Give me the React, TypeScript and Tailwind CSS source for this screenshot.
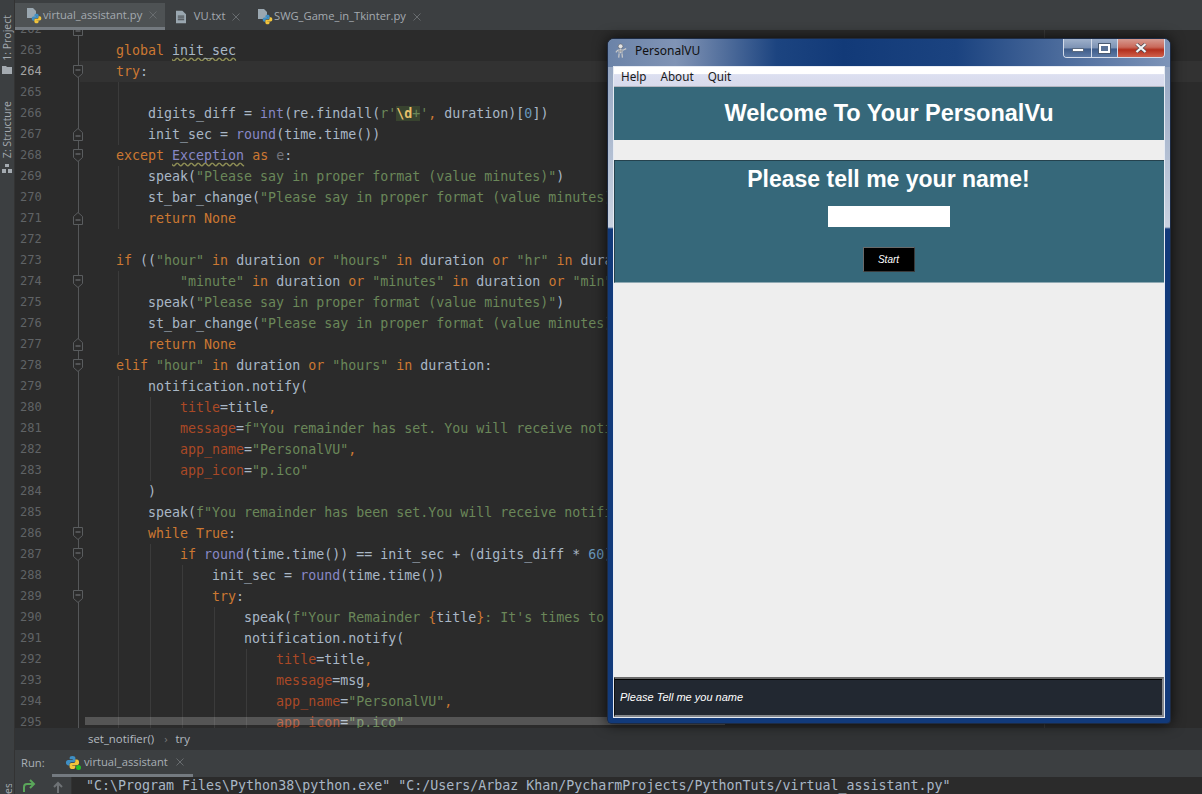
import type { ReactNode } from 'react';

type Tok = [keyof typeof tone, string];

const tone = {
  k: 'text-[#cc7832]',
  s: 'text-[#6a8759]',
  b: 'text-[#8888c6]',
  p: 'text-[#aa4926]',
  n: 'text-[#6897bb]',
  w: 'text-[#a9b7c6] underline decoration-wavy decoration-[#8f8f55] underline-offset-2',
  c: 'text-[#8888c6] underline decoration-wavy decoration-[#8f8f55] underline-offset-2',
  g: 'text-[#72737a]',
  r: 'text-[#e8bf6a] font-bold bg-[#38432f]',
  q: 'text-[#6a8759] bg-[#38432f]',
};

const k = (t: string): Tok => ['k', t];
const s = (t: string): Tok => ['s', t];
const b = (t: string): Tok => ['b', t];
const p = (t: string): Tok => ['p', t];
const n = (t: string): Tok => ['n', t];

const code: { no: number; guides: number; toks?: (string | Tok)[] }[] = [
  { no: 262, guides: 0 },
  { no: 263, guides: 0, toks: [k('global'), ' ', ['w', 'init_sec']] },
  { no: 264, guides: 0, toks: [k('try'), ':'] },
  { no: 265, guides: 1 },
  { no: 266, guides: 1, toks: ['    digits_diff = ', b('int'), '(re.findall(', s("r'"), ['r', '\\d'], ['q', '+'], s("'"), k(','), ' duration)[', n('0'), '])'] },
  { no: 267, guides: 1, toks: ['    init_sec = ', b('round'), '(time.time())'] },
  { no: 268, guides: 0, toks: [k('except'), ' ', ['c', 'Exception'], ' ', k('as'), ' ', ['g', 'e'], ':'] },
  { no: 269, guides: 1, toks: ['    speak(', s('"Please say in proper format (value minutes)"'), ')'] },
  { no: 270, guides: 1, toks: ['    st_bar_change(', s('"Please say in proper format (value minutes)"'), ')'] },
  { no: 271, guides: 1, toks: ['    ', k('return None')] },
  { no: 272, guides: 0 },
  { no: 273, guides: 0, toks: [k('if'), ' ((', s('"hour"'), ' ', k('in'), ' duration ', k('or'), ' ', s('"hours"'), ' ', k('in'), ' duration ', k('or'), ' ', s('"hr"'), ' ', k('in'), ' duration'] },
  { no: 274, guides: 1, toks: ['        ', s('"minute"'), ' ', k('in'), ' duration ', k('or'), ' ', s('"minutes"'), ' ', k('in'), ' duration ', k('or'), ' ', s('"min"')] },
  { no: 275, guides: 1, toks: ['    speak(', s('"Please say in proper format (value minutes)"'), ')'] },
  { no: 276, guides: 1, toks: ['    st_bar_change(', s('"Please say in proper format (value minutes)"'), ')'] },
  { no: 277, guides: 1, toks: ['    ', k('return None')] },
  { no: 278, guides: 0, toks: [k('elif'), ' ', s('"hour"'), ' ', k('in'), ' duration ', k('or'), ' ', s('"hours"'), ' ', k('in'), ' duration:'] },
  { no: 279, guides: 1, toks: ['    notification.notify('] },
  { no: 280, guides: 2, toks: ['        ', p('title'), '=title', k(',')] },
  { no: 281, guides: 2, toks: ['        ', p('message'), '=', s('f"You remainder has set. You will receive notification"'), k(',')] },
  { no: 282, guides: 2, toks: ['        ', p('app_name'), '=', s('"PersonalVU"'), k(',')] },
  { no: 283, guides: 2, toks: ['        ', p('app_icon'), '=', s('"p.ico"')] },
  { no: 284, guides: 1, toks: ['    )'] },
  { no: 285, guides: 1, toks: ['    speak(', s('f"You remainder has been set.You will receive notification"'), ')'] },
  { no: 286, guides: 1, toks: ['    ', k('while True'), ':'] },
  { no: 287, guides: 2, toks: ['        ', k('if'), ' ', b('round'), '(time.time()) == init_sec + (digits_diff * ', n('60'), '):'] },
  { no: 288, guides: 3, toks: ['            init_sec = ', b('round'), '(time.time())'] },
  { no: 289, guides: 3, toks: ['            ', k('try'), ':'] },
  { no: 290, guides: 4, toks: ['                speak(', s('f"Your Remainder '), k('{'), 'title', k('}'), s(": It's times to do"), ')'] },
  { no: 291, guides: 4, toks: ['                notification.notify('] },
  { no: 292, guides: 5, toks: ['                    ', p('title'), '=title', k(',')] },
  { no: 293, guides: 5, toks: ['                    ', p('message'), '=msg', k(',')] },
  { no: 294, guides: 5, toks: ['                    ', p('app_name'), '=', s('"PersonalVU"'), k(',')] },
  { no: 295, guides: 5, toks: ['                    ', p('app_icon'), '=', s('"p.ico"')] },
];

const foldDown = [264, 268, 274, 278, 286, 287, 289];
const foldUp = [262, 267, 271, 277];
const guideLeft = ['left-[103px]', 'left-[135px]', 'left-[167px]', 'left-[199px]', 'left-[231px]'];

function PyLogo({ className }: { className: string }) {
  const blue = 'M8 1C5.6 1 5 2 5 3.2v1.4h3.2v.6H3.4C2 5.2 1 6.2 1 8.1s1 3 2.3 3H5V9.4c0-1 .8-1.8 1.8-1.8h2.6c1 0 1.7-.8 1.7-1.7V3.2C11.100 2 10 1 8 1z';
  return (
    <svg viewBox="0 0 16 16" className={className}>
      <path d={blue} fill="#3f8fc4" />
      <path d={blue} fill="#f2c43b" transform="rotate(180 8 8)" />
    </svg>
  );
}

function PyFile() {
  return (
    <span className="relative w-[15px] h-[15px] shrink-0">
      <svg viewBox="0 0 15 15" className="w-[15px] h-[15px]">
        <path d="M1 0h6l3 3v7H1z" fill="#9aa7b0" />
      </svg>
      <PyLogo className="absolute right-[-1px] bottom-[-1px] w-[11px] h-[11px]" />
    </span>
  );
}

function CloseX() {
  return (
    <svg viewBox="0 0 8 8" className="w-[8px] h-[8px] shrink-0">
      <path d="M.5.5l7 7M7.500.5l-7 7" stroke="#686c6f" />
    </svg>
  );
}

function Tab({ icon, name, active, width }: { icon: ReactNode; name: string; active?: boolean; width: string }) {
  return (
    <div className={`flex items-center h-[27px] mt-[3px] pl-[11px] ${width} ${active ? 'bg-[#4e5254] border-b-[3px] border-[#747a80]' : ''}`}>
      {icon}
      <span className="ml-[2px] mr-[7px] text-[11.2px] text-[#a4aab0] whitespace-pre">{name}</span>
      <CloseX />
    </div>
  );
}

function Fold({ up }: { up: boolean }) {
  return (
    <svg viewBox="0 0 10 13" className="absolute left-[58px] top-[4px] w-[10px] h-[13px]">
      <path
        d={up ? 'M.5 12.500h9V4.500L5 .5.500 4.500z' : 'M.5.5h9v8L5 12.500.5 8.500z'}
        fill="#2b2b2b"
        stroke="#5a5d5f"
      />
      <path d={up ? 'M2.500 8h5' : 'M2.500 5h5'} stroke="#7a7d80" />
    </svg>
  );
}

function CodeLine({ no, guides, toks }: { no: number; guides: number; toks?: (string | Tok)[] }) {
  const current = no === 264;
  return (
    <div className="relative flex h-[21px] leading-[21px]">
      <div className={`w-[29px] pl-[5px] text-[12px] ${current ? 'text-[#a4a3a3]' : 'text-[#606366]'}`}>{no}</div>
      <div className={`absolute left-[65px] right-0 top-0 bottom-0 ${current ? 'bg-[#323232]' : ''}`} />
      {foldDown.includes(no) && <Fold up={false} />}
      {foldUp.includes(no) && <Fold up />}
      {guideLeft.slice(0, guides).map((g) => (
        <div key={g} className={`absolute top-0 bottom-0 w-px bg-[#3b3b3b] ${g}`} />
      ))}
      <pre className="relative ml-[72px] text-[13.3px] text-[#a9b7c6] whitespace-pre font-['DejaVu_Sans_Mono',monospace]">
        {toks?.map((t, i) =>
          typeof t === 'string' ? (
            <span key={i}>{t}</span>
          ) : (
            <span key={i} className={tone[t[0]]}>
              {t[1]}
            </span>
          ),
        )}
      </pre>
    </div>
  );
}

function Skeleton() {
  return (
    <svg viewBox="0 0 16 16" className="w-[15px] h-[16px] shrink-0">
      <circle cx="7" cy="3" r="2.500" fill="#e4e4e4" stroke="#555" strokeWidth=".5" />
      <path d="M7 5.500v5M4 7h6M4.500 9h5M4 7L2 9.500M10 7l3 -1.500M5.500 10.500L5 15M8.500 10.500L9 15" stroke="#c9c9c9" strokeWidth="1.300" fill="none" />
      <path d="M5 8h4" stroke="#555" strokeWidth=".5" />
    </svg>
  );
}

function PersonalVu() {
  return (
    <div className="absolute left-[607px] top-[38px] w-[564px] h-[686px] flex flex-col rounded-t-[7px] rounded-b-[4px] border border-[#1d2b44] overflow-hidden shadow-[0_0_14px_rgba(0,0,0,0.75)] bg-[linear-gradient(to_bottom,#8ea0bd_0,#c9d2e0_188px,#123a7a_190px,#123a7a_100%)] font-['Liberation_Sans',sans-serif]">
      <div className="flex h-[28px] shrink-0 bg-[linear-gradient(to_right,#6b83a8_0,#8094b5_12%,#7288ad_15%,#1c4480_30%,#123a78_42%,#1b4380_62%,#4a6a9b_80%,#7d94b8_100%)]">
        <div className="flex items-center pl-[6px] pb-[4px] h-[27px]">
          <Skeleton />
          <span className="ml-[6px] text-[12px] text-[#101010] font-['Noto_Sans',sans-serif]">PersonalVU</span>
        </div>
        <div className="ml-auto mr-[5px] flex h-[19px] rounded-b-[4px] border border-t-0 border-[#d4dcea] overflow-hidden">
          <div className="w-[28px] flex items-center justify-center border-r border-[#d4dcea] bg-[linear-gradient(to_bottom,#9eb0ca_0,#7c92b4_50%,#3d5b89_55%,#5d7aa5_100%)]">
            <div className="w-[12px] h-[4px] mt-[3px] bg-white border border-[#5a6a80]" />
          </div>
          <div className="w-[26px] flex items-center justify-center border-r border-[#d4dcea] bg-[linear-gradient(to_bottom,#9eb0ca_0,#7c92b4_50%,#3d5b89_55%,#5d7aa5_100%)]">
            <div className="w-[11px] h-[9px] bg-[#5a7296] border-2 border-white outline outline-[#4a5a70]" />
          </div>
          <div className="w-[46px] flex items-center justify-center bg-[linear-gradient(to_bottom,#d69a90_0,#c9695a_45%,#b22f1c_60%,#d0604a_100%)]">
            <svg viewBox="0 0 12 10" className="w-[12px] h-[10px]">
              <path d="M1.500 1l9 8M10.500 1l-9 8" stroke="#4a4a52" strokeWidth="3.500" />
              <path d="M1.500 1l9 8M10.500 1l-9 8" stroke="#f4f4f4" strokeWidth="2.300" />
            </svg>
          </div>
        </div>
      </div>

      <div className="flex-1 flex flex-col mx-[6px] mb-[6px] min-h-0 bg-[#eeeeee] outline outline-[#e6ebf3]">
        <div className="h-[20px] shrink-0 flex items-center pl-[7px] gap-[14px] text-[11.7px] text-[#1a1a1a] border-b border-[#b4b6c0] bg-[linear-gradient(to_bottom,#ffffff_0,#ffffff_35%,#dcdff0_40%,#d8dbec_100%)] font-['Noto_Sans',sans-serif]">
          <span>Help</span>
          <span>About</span>
          <span>Quit</span>
        </div>
        <div className="h-[53px] shrink-0 flex items-center justify-center bg-[#36687a]">
          <h1 className="text-[23.5px] font-bold text-white">Welcome To Your PersonalVu</h1>
        </div>
        <div className="h-[20px] shrink-0" />
        <div className="h-[123px] shrink-0 flex flex-col items-center pr-[2px] bg-[#36687a] border-t border-l border-b border-[#25424e] border-b-[#8fa9b3]">
          <h2 className="mt-[2px] h-[32px] leading-[32px] text-[23px] font-bold text-white">Please tell me your name!</h2>
          <div className="mt-[11px] w-[122px] h-[21px] shrink-0 bg-white" />
          <button className="mt-[20px] w-[52px] h-[25px] shrink-0 bg-black border border-[#6a6a6a] border-r-[#3a3a3a] border-b-[#3a3a3a] text-[10px] italic text-white">
            Start
          </button>
        </div>
        <div className="flex-1" />
        <div className="h-[40px] shrink-0 flex items-center pl-[5px] bg-[#222831] border-t-2 border-b-2 border-r-2 border-l border-[#85888c] border-t-[#6a6a6a] border-l-[#111] shadow-[inset_0_1px_0_#000] text-[11px] italic text-white">
          Please Tell me you name
        </div>
      </div>
    </div>
  );
}

export default function App() {
  return (
    <div className="relative w-[1202px] h-[794px] overflow-hidden flex bg-[#2b2b2b] font-['Open_Sans',sans-serif]">
      <aside className="w-[15px] shrink-0 bg-[#3c3f41] flex flex-col items-center text-[10.5px] text-[#a4aab0] border-r border-[#333]">
        <div className="mt-[15px] [writing-mode:vertical-rl] rotate-180 leading-none whitespace-pre">1: Project</div>
        <svg viewBox="0 0 10 8" className="mt-[5px] w-[10px] h-[8px] shrink-0">
          <path d="M0 0h4l1 1h5v7H0z" fill="#a4aab0" />
        </svg>
        <div className="mt-[27px] [writing-mode:vertical-rl] rotate-180 leading-none whitespace-pre">Z: Structure</div>
        <svg viewBox="0 0 10 10" className="mt-[6px] w-[10px] h-[10px] shrink-0">
          <path d="M3 0h4v3H3zM0 5h4v4H0zM6 5h4v4H6z" fill="#a4aab0" />
        </svg>
        <div className="mt-auto h-[10px] overflow-hidden [writing-mode:vertical-rl] rotate-180 leading-none whitespace-pre">es</div>
      </aside>

      <main className="flex-1 min-w-0 flex flex-col">
        <div className="h-[30px] shrink-0 flex bg-[#3c3f41]">
          <Tab active width="w-[150px]" icon={<PyFile />} name="virtual_assistant.py" />
          <Tab
            width="w-[81px]"
            icon={
              <svg viewBox="0 0 11 14" className="w-[10px] h-[14px] shrink-0">
                <path d="M0 0h7l4 4v10H0z" fill="#9aa7b0" />
                <path d="M2 6h7M2 8h7M2 10h7" stroke="#3c3f41" />
              </svg>
            }
            name="  VU.txt"
          />
          <Tab width="w-[190px]" icon={<PyFile />} name="SWG_Game_in_Tkinter.py" />
        </div>

        <div className="relative h-[698px] shrink-0 overflow-hidden bg-[#2b2b2b]">
          <div className="absolute left-[63px] top-0 bottom-0 w-px bg-[#555759]" />
          <div className="absolute left-[1029px] top-0 bottom-0 w-px bg-[#3a3a3a]" />
          <div className="relative mt-[-11px] font-['DejaVu_Sans_Mono',monospace]">
            {code.map((l) => (
              <CodeLine key={l.no} {...l} />
            ))}
          </div>
          <div className="absolute left-[70px] top-[687px] w-[640px] h-[8px] bg-white/20" />
        </div>

        <div className="h-[22px] shrink-0 flex items-center pl-[73px] bg-[#313335] text-[11.4px] text-[#b3bac0]">
          <span>set_notifier()</span>
          <span className="ml-[10px] text-[#777]">›</span>
          <span className="ml-[8px]">try</span>
        </div>

        <div className="h-[27px] shrink-0 flex bg-[#3c3f41] text-[11.2px] text-[#a9b0b6]">
          <span className="ml-[6px] w-[31px] leading-[26px]">Run:</span>
          <div className="flex items-center h-[27px] w-[141px] pl-[13px] border-b-[3px] border-[#747a80]">
            <span className="relative w-[15px] h-[15px] shrink-0">
              <PyLogo className="w-[15px] h-[15px]" />
              <span className="absolute right-[-1px] bottom-0 w-[5px] h-[5px] rounded-full bg-[#22c02a]" />
            </span>
            <span className="ml-[4px] mr-[8px]">virtual_assistant</span>
            <CloseX />
          </div>
        </div>

        <div className="flex-1 min-h-0 flex">
          <div className="w-[57px] shrink-0 bg-[#3c3f41] border-r border-[#323232] flex gap-[16px] pl-[7px] pt-[2px]">
            <svg viewBox="0 0 14 14" className="w-[14px] h-[14px] shrink-0">
              <path d="M2 13V8a3 3 0 013-3h6M8 1l4 4-4 4" fill="none" stroke="#5aa65a" strokeWidth="2" />
            </svg>
            <svg viewBox="0 0 12 12" className="w-[12px] h-[12px] mt-[2px] shrink-0">
              <path d="M6 12V2M2 6l4-4 4 4" fill="none" stroke="#6e7275" strokeWidth="2" />
            </svg>
          </div>
          <pre className="ml-[14px] text-[13.3px] leading-[18px] text-[#a9b7c6] whitespace-pre font-['DejaVu_Sans_Mono',monospace]">
            "C:\Program Files\Python38\python.exe" "C:/Users/Arbaz Khan/PycharmProjects/PythonTuts/virtual_assistant.py"
          </pre>
        </div>
      </main>

      <PersonalVu />
    </div>
  );
}
